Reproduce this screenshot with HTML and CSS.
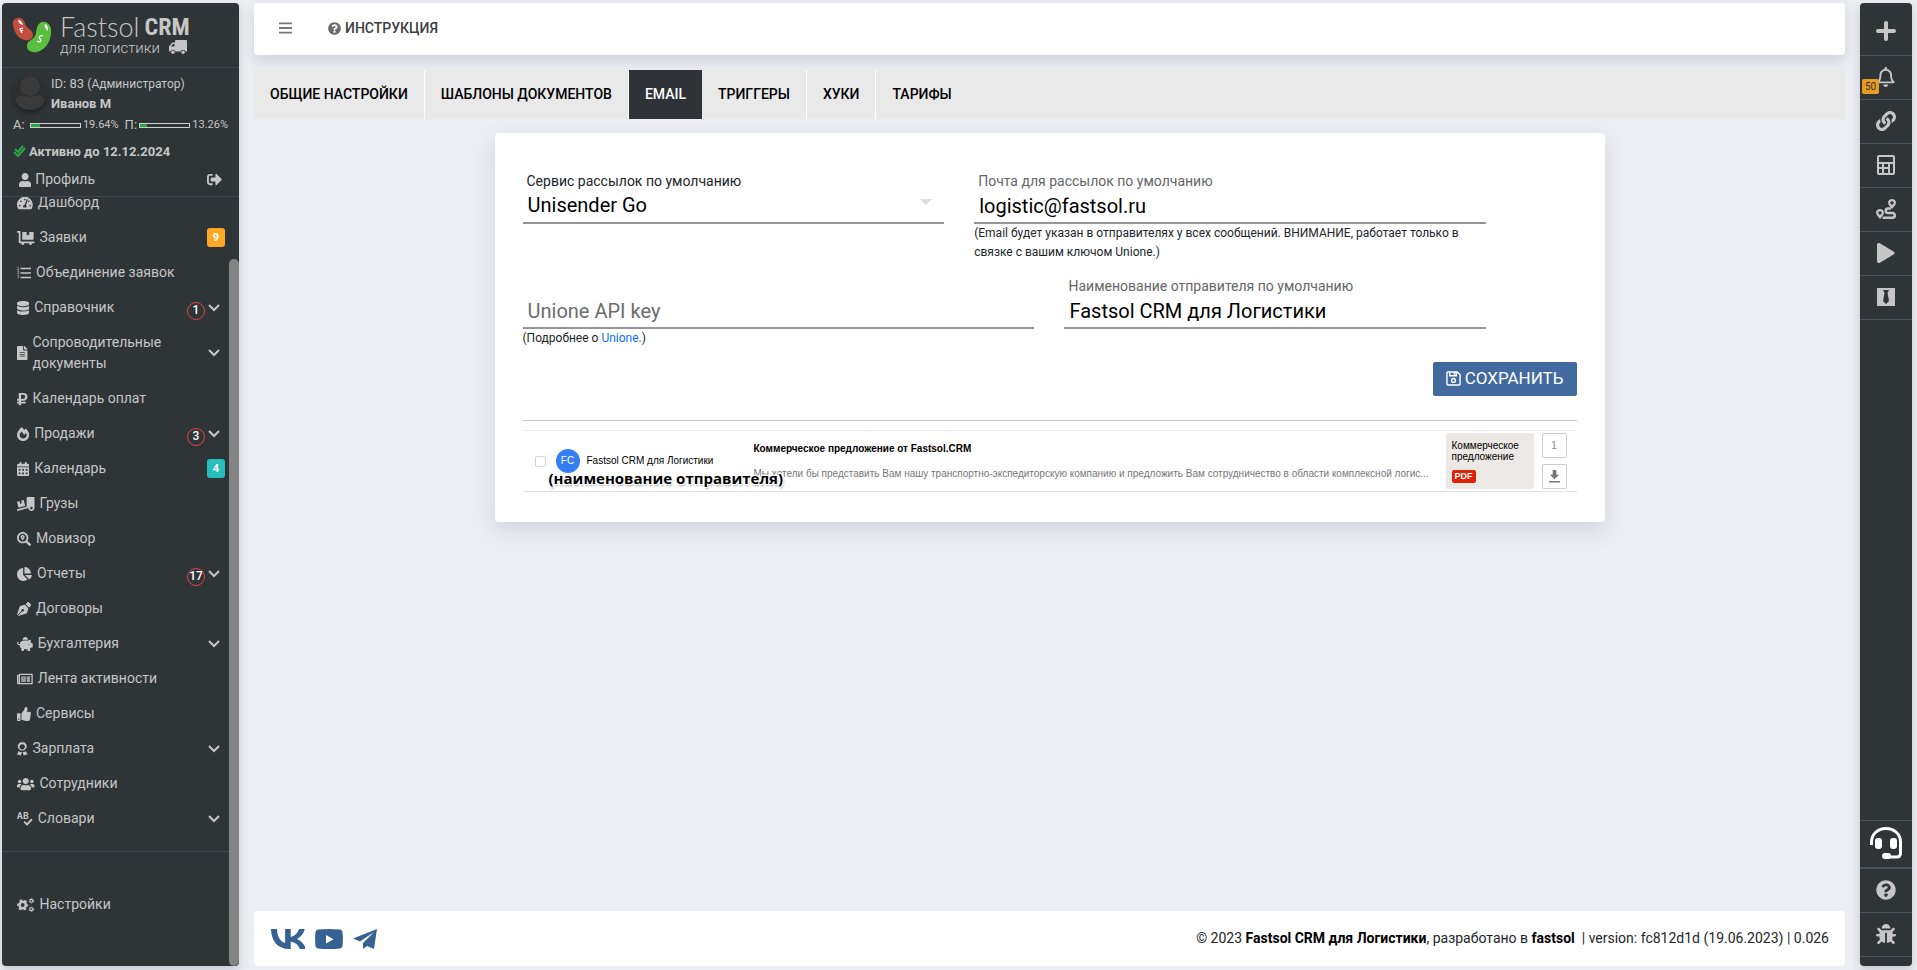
FILE: index.html
```html
<!DOCTYPE html>
<html lang="ru">
<head>
<meta charset="utf-8">
<meta name="viewport" content="width=device-width, initial-scale=1">
<title>Fastsol CRM для Логистики</title>
<link rel="stylesheet" href="styles.css">
</head>
<body>
<div class="app">

<aside class="sidebar">
  <a class="brand" href="#">
    <svg class="brand-mark" viewBox="0 0 40 36" aria-hidden="true">
      <path d="M1 8C0 3 4 0 8 1c5 1 4 6 7 9 3 3 6 4 6 8s-4 6-8 5C6 22 2 15 1 8z" fill="#c34c40"/>
      <path d="M28 6c4-3 10 0 11 6 1 9-4 21-14 23-6 1-11-2-10-7 1-5 6-5 8-9 2-5 1-10 5-13z" fill="#5abf3f"/>
      <path d="M6 3c3 0 4 2 5 5-3-1-5-2-5-5zM33 7c3 1 3 4 3 7-2-2-4-4-3-7z" fill="#fff"/>
      <path d="M10 16l-2-4 3-1M9 14l2-1M31 19c-3-1-5 1-3 3s0 4-3 2" fill="none" stroke="#fff" stroke-width="1.3"/>
    </svg>
    <span class="brand-text">
      <span class="brand-name"><span class="brand-thin">Fastsol</span><span class="brand-bold">CRM</span></span>
      <span class="brand-sub">для логистики
        <svg class="brand-truck" viewBox="0 0 18 14" aria-hidden="true"><path d="M7 0h10q1 0 1 1v10q0 .6-.6.600H16.600a2.600 2.600 0 0 0-5 0H6.400a2.600 2.600 0 0 0-5 0H.6Q0 11.600 0 11V6.500l3-3.700q.3-.3.800-.3H6V1q0-1 1-1zM4 4L2 6.500h3.500V4z" fill-rule="evenodd"/><circle cx="3.900" cy="12.200" r="1.700"/><circle cx="14.100" cy="12.200" r="1.700"/></svg>
      </span>
    </span>
  </a>

  <div class="user">
    <div class="user-head">
      <svg class="avatar" viewBox="0 0 34 34" aria-hidden="true"><circle cx="17" cy="17" r="17" fill="#2b2f32"/><circle cx="17" cy="10" r="10" fill="#3a3a3a"/><path d="M2 25c4-8 8-5 15-4 7-1 11-4 15 4a17 17 0 0 1-30 0z" fill="#3a3a3a"/></svg>
      <div>
        <div class="user-id">ID: 83 <small>(Администратор)</small></div>
        <div class="user-name">Иванов М</div>
      </div>
    </div>
    <div class="usage">
      <span class="usage-key">А:</span><span class="meter"><span class="meter-fill" style="width:19.64%"></span></span><span>19.64%</span>
      <span class="usage-key usage-next">П:</span><span class="meter"><span class="meter-fill" style="width:13.26%"></span></span><span>13.26%</span>
    </div>
    <div class="active-until">
      <svg class="check" viewBox="0 0 13 13" aria-hidden="true"><path d="M2 4l3 3 5-6M1 7l4 4 7-8" fill="none" stroke="#28a745" stroke-width="2"/></svg>
      Активно до 12.12.2024
    </div>
    <div class="profile">
      <a href="#"><svg class="icon" viewBox="0 0 448 512" aria-hidden="true"><path d="M224 256c70.7 0 128-57.3 128-128S294.700 0 224 0 96 57.300 96 128s57.300 128 128 128zm89.600 32h-16.700c-22.200 10.200-46.900 16-72.900 16s-50.600-5.800-72.900-16h-16.700C60.200 288 0 348.200 0 422.400V464c0 26.500 21.500 48 48 48h352c26.500 0 48-21.500 48-48v-41.600c0-74.200-60.200-134.400-134.400-134.400z"/></svg>Профиль</a>
      <a href="#" aria-label="Выход"><svg class="icon logout" viewBox="0 0 512 512" aria-hidden="true"><path d="M497 273L329 441c-15 15-41 4.500-41-17v-96H152c-13.300 0-24-10.700-24-24v-96c0-13.300 10.700-24 24-24h136V88c0-21.400 25.900-32 41-17l168 168c9.300 9.400 9.300 24.600 0 34zM192 436v-40c0-6.600-5.400-12-12-12H96c-17.700 0-32-14.300-32-32V160c0-17.700 14.300-32 32-32h84c6.600 0 12-5.400 12-12V76c0-6.600-5.400-12-12-12H96c-53 0-96 43-96 96v192c0 53 43 96 96 96h84c6.600 0 12-5.400 12-12z"/></svg></a>
    </div>
  </div>

  <div class="nav-scroll">
    <nav class="nav">
      <ul class="nav-list">
        <li><a href="#"><svg class="icon" viewBox="0 0 576 512"><path d="M288 32C128.940 32 0 160.940 0 320c0 52.800 14.250 102.260 39.060 144.800 5.610 9.620 16.300 15.200 27.440 15.200h443c11.140 0 21.830-5.580 27.440-15.200C561.750 422.260 576 372.800 576 320c0-159.060-128.940-288-288-288zm0 64c14.710 0 26.580 10.130 30.320 23.650-1.110 2.260-2.640 4.230-3.450 6.670l-9.220 27.670c-5.130 3.490-10.970 6.010-17.640 6.010-17.670 0-32-14.330-32-32S270.330 96 288 96zM96 384c-17.670 0-32-14.330-32-32s14.330-32 32-32 32 14.330 32 32-14.330 32-32 32zm48-160c-17.670 0-32-14.330-32-32s14.330-32 32-32 32 14.330 32 32-14.330 32-32 32zm246.770-72.410l-61.330 184C343.130 347.330 352 364.540 352 384c0 11.720-3.380 22.550-8.880 32H232.880c-5.500-9.450-8.880-20.280-8.880-32 0-33.940 26.500-61.430 59.900-63.590l61.340-184.010c4.170-12.560 17.730-19.450 30.360-15.170 12.570 4.190 19.350 17.790 15.170 30.360zm14.660 57.200l15.520-46.550c3.470-1.290 7.130-2.230 11.050-2.230 17.670 0 32 14.330 32 32s-14.330 32-32 32c-11.380-.01-20.890-6.280-26.570-15.220zM480 384c-17.670 0-32-14.330-32-32s14.330-32 32-32 32 14.330 32 32-14.330 32-32 32z"/></svg><span class="nav-label">Дашборд</span></a></li>
        <li><a href="#"><svg class="icon" viewBox="0 0 640 512"><path d="M208 320h384c8.800 0 16-7.200 16-16V48c0-8.800-7.200-16-16-16H448v128l-48-32-48 32V32H208c-8.800 0-16 7.200-16 16v256c0 8.800 7.200 16 16 16zm416 64H128V16c0-8.800-7.200-16-16-16H16C7.200 0 0 7.200 0 16v32c0 8.800 7.200 16 16 16h48v368c0 8.800 7.200 16 16 16h82.900c-1.800 5-2.900 10.400-2.900 16 0 26.500 21.500 48 48 48s48-21.500 48-48c0-5.600-1.200-11-2.900-16H451c-1.800 5-2.900 10.400-2.900 16 0 26.500 21.500 48 48 48s48-21.500 48-48c0-5.600-1.200-11-2.900-16H624c8.800 0 16-7.200 16-16v-32c0-8.800-7.200-16-16-16z"/></svg><span class="nav-label">Заявки</span><span class="tag tag-orange">9</span></a></li>
        <li><a href="#"><svg class="icon" viewBox="0 0 512 512"><path d="M128 64h384v56H128zM128 228h384v56H128zM128 392h384v56H128z"/><path d="M20 40h24v100M16 140h56M16 200h48v40l-46 40h54M16 344h50l-26 46c36 0 36 60-24 50" fill="none" stroke="currentColor" stroke-width="24"/></svg><span class="nav-label">Объединение заявок</span></a></li>
        <li><a href="#"><svg class="icon" viewBox="0 0 448 512"><path d="M448 73.143v45.714C448 159.143 347.667 192 224 192S0 159.143 0 118.857V73.143C0 32.857 100.333 0 224 0s224 32.857 224 73.143zM448 176v102.857C448 319.143 347.667 352 224 352S0 319.143 0 278.857V176c48.125 33.143 136.208 48.572 224 48.572S399.874 209.143 448 176zm0 160v102.857C448 479.143 347.667 512 224 512S0 479.143 0 438.857V336c48.125 33.143 136.208 48.572 224 48.572S399.874 369.143 448 336z"/></svg><span class="nav-label">Справочник</span><span class="ring">1</span><svg class="chev" viewBox="0 0 12 8"><path d="M1 1l5 5 5-5"/></svg></a></li>
        <li><a href="#"><svg class="icon" viewBox="0 0 384 512"><path d="M224 136V0H24C10.700 0 0 10.700 0 24v464c0 13.300 10.700 24 24 24h336c13.300 0 24-10.700 24-24V160H248c-13.200 0-24-10.800-24-24zm64 236c0 6.600-5.400 12-12 12H108c-6.600 0-12-5.400-12-12v-8c0-6.600 5.400-12 12-12h168c6.600 0 12 5.400 12 12v8zm0-64c0 6.600-5.400 12-12 12H108c-6.600 0-12-5.400-12-12v-8c0-6.600 5.400-12 12-12h168c6.600 0 12 5.400 12 12v8zm0-72v8c0 6.600-5.400 12-12 12H108c-6.600 0-12-5.400-12-12v-8c0-6.600 5.400-12 12-12h168c6.600 0 12 5.400 12 12zm96-114.100v6.100H256V0h6.100c6.400 0 12.500 2.500 17 7l97.900 98c4.500 4.500 7 10.600 7 16.900z"/></svg><span class="nav-label">Сопроводительные документы</span><svg class="chev" viewBox="0 0 12 8"><path d="M1 1l5 5 5-5"/></svg></a></li>
        <li><a href="#"><svg class="icon" viewBox="0 0 384 512"><path d="M239.360 320C324.480 320 384 260.542 384 175.071S324.480 32 239.360 32H76c-6.627 0-12 5.373-12 12v206.632H12c-6.627 0-12 5.373-12 12V308c0 6.627 5.373 12 12 12h52v32H12c-6.627 0-12 5.373-12 12v40c0 6.627 5.373 12 12 12h52v52c0 6.627 5.373 12 12 12h58.560c6.627 0 12-5.373 12-12v-52H308c6.627 0 12-5.373 12-12v-40c0-6.627-5.373-12-12-12H146.560v-32h92.800zm-92.800-219.252h78.720c46.720 0 74.880 29.110 74.880 74.323 0 45.832-28.160 75.561-76.160 75.561h-77.440V100.748z"/></svg><span class="nav-label">Календарь оплат</span></a></li>
        <li><a href="#"><svg class="icon" viewBox="0 0 448 512"><path d="M323.560 51.200c-20.800 19.300-39.580 39.590-56.220 59.970C240.080 73.620 206.280 35.530 168 0 69.740 91.170 0 209.960 0 281.600 0 408.850 100.290 512 224 512s224-103.150 224-230.400c0-53.270-51.980-163.140-124.440-230.400zm-19.470 340.650C282.430 407.010 255.720 416 226.860 416 154.710 416 96 368.260 96 290.750c0-38.610 24.310-72.630 72.790-130.750 6.930 7.980 98.830 125.340 98.830 125.340l58.630-66.880c4.140 6.850 7.910 13.550 11.270 19.970 27.350 52.190 15.810 118.970-33.430 153.420z"/></svg><span class="nav-label">Продажи</span><span class="ring">3</span><svg class="chev" viewBox="0 0 12 8"><path d="M1 1l5 5 5-5"/></svg></a></li>
        <li><a href="#"><svg class="icon" viewBox="0 0 448 512"><path fill-rule="evenodd" d="M96 0h64v64h128V0h64v64h48c26 0 48 22 48 48v48H0v-48c0-26 22-48 48-48h48zM0 192h448v272c0 26-22 48-48 48H48c-26 0-48-22-48-48zM64 256v64h64v-64zM192 256v64h64v-64zM320 256v64h64v-64zM64 384v64h64v-64zM192 384v64h64v-64zM320 384v64h64v-64z"/></svg><span class="nav-label">Календарь</span><span class="tag tag-teal">4</span></a></li>
        <li><a href="#"><svg class="icon" viewBox="0 0 640 512"><path d="M50.200 375.600c2.300 8.500 11.100 13.600 19.600 11.300l216.400-58c8.500-2.300 13.600-11.100 11.300-19.600l-49.700-185.500c-2.300-8.500-11.100-13.600-19.600-11.300L151 133.300l24.800 92.700-61.800 16.500-24.800-92.700-77.300 20.700C3.400 172.800-1.700 181.600.6 190.100l49.600 185.500zM384 0c-17.700 0-32 14.300-32 32v323.600L5.900 450c-4.300 1.200-6.800 5.600-5.600 9.800l12.600 46.300c1.200 4.300 5.600 6.800 9.800 5.600l393.700-107.400C418.800 464.100 467.600 512 528 512c61.900 0 112-50.100 112-112V0H384zm144 448c-26.500 0-48-21.500-48-48s21.500-48 48-48 48 21.500 48 48-21.500 48-48 48z"/></svg><span class="nav-label">Грузы</span></a></li>
        <li><a href="#"><svg class="icon" viewBox="0 0 512 512"><path d="M505.040 442.660l-99.710-99.690c-4.500-4.500-10.600-7-17-7h-16.300c27.600-35.300 44-79.690 44-127.990C416.030 93.090 322.920 0 208.020 0S0 93.090 0 207.980s93.110 207.980 208.020 207.980c48.300 0 92.710-16.400 128.010-44v16.300c0 6.400 2.500 12.500 7 17l99.710 99.690c9.400 9.400 24.600 9.400 33.900 0l28.300-28.300c9.400-9.400 9.400-24.590.1-33.990zm-297.020-90.700c-79.540 0-144-64.340-144-143.980 0-79.530 64.350-143.980 144-143.980 79.540 0 144 64.340 144 143.980 0 79.530-64.350 143.980-144 143.980zm.02-239.960c-40.780 0-73.840 33.050-73.840 73.830 0 32.960 48.260 93.050 66.750 114.860a9.240 9.240 0 0 0 14.180 0c18.490-21.810 66.750-81.890 66.750-114.860 0-40.780-33.060-73.830-73.840-73.830zm0 96c-13.260 0-24-10.750-24-24 0-13.260 10.750-24 24-24s24 10.740 24 24c0 13.250-10.750 24-24 24z"/></svg><span class="nav-label">Мовизор</span></a></li>
        <li><a href="#"><svg class="icon" viewBox="0 0 544 512"><path d="M527.790 288H290.500l158.030 158.030c6.040 6.040 15.980 6.530 22.190.68 38.700-36.460 65.320-85.610 73.130-140.860 1.340-9.460-6.510-17.850-16.060-17.850zm-15.830-64.800C503.720 103.740 408.260 8.280 288.800.04 279.680-.59 272 7.100 272 16.240V240h223.770c9.140 0 16.820-7.680 16.190-16.800zM224 288V50.710c0-9.550-8.390-17.400-17.840-16.060C86.990 51.490-4.100 155.600.14 280.370 4.500 408.510 114.830 513.590 243.030 511.980c50.400-.63 96.970-16.870 135.260-44.030 7.900-5.600 8.420-17.230 1.570-24.080L224 288z"/></svg><span class="nav-label">Отчеты</span><span class="ring">17</span><svg class="chev" viewBox="0 0 12 8"><path d="M1 1l5 5 5-5"/></svg></a></li>
        <li><a href="#"><svg class="icon" viewBox="0 0 512 512"><path d="M136.600 138.790a64.003 64.003 0 0 0-43.310 41.350L0 460l14.690 14.690L164.800 324.580c-2.990-6.260-4.800-13.180-4.800-20.580 0-26.510 21.490-48 48-48s48 21.490 48 48-21.490 48-48 48c-7.400 0-14.320-1.810-20.580-4.800L37.310 497.310 52 512l279.860-93.290a64.003 64.003 0 0 0 41.350-43.310L416 224 288 96l-151.400 42.790zm361.340-64.620l-60.110-60.110c-18.750-18.750-49.160-18.750-67.910 0l-56.550 56.550 128.020 128.020 56.550-56.550c18.750-18.750 18.750-49.150 0-67.910z"/></svg><span class="nav-label">Договоры</span></a></li>
        <li><a href="#"><svg class="icon" viewBox="0 0 576 512"><path d="M560 224h-29.500c-8.800-20-21.600-37.700-37.400-52.500L512 96h-32c-29.400 0-55.400 13.500-73 34.300-7.600-1.100-15.100-2.300-23-2.300H256c-77.400 0-141.900 55-156.800 128H56c-14.800 0-26.500-13.500-23.500-28.800C34.700 215.800 45.400 208 57 208h1c3.300 0 6-2.700 6-6v-20c0-3.300-2.700-6-6-6-28.500 0-53.900 20.400-57.500 48.600C-3.900 258.800 22.700 288 56 288h40c0 52.200 25.400 98.100 64 127.300V496c0 8.800 7.200 16 16 16h64c8.800 0 16-7.200 16-16v-48h128v48c0 8.800 7.200 16 16 16h64c8.800 0 16-7.200 16-16v-80.700c11.800-8.900 22.300-19.400 31.300-31.300H560c8.800 0 16-7.200 16-16V240c0-8.800-7.200-16-16-16zm-128 64c-8.800 0-16-7.200-16-16s7.200-16 16-16 16 7.200 16 16-7.200 16-16 16zM256 96h128c5.400 0 10.700.4 15.900.8 0-.3.1-.5.1-.8 0-53-43-96-96-96s-96 43-96 96c0 2.100.5 4.100.6 6.200 15.200-3.900 31-6.200 47.400-6.200z"/></svg><span class="nav-label">Бухгалтерия</span><svg class="chev" viewBox="0 0 12 8"><path d="M1 1l5 5 5-5"/></svg></a></li>
        <li><a href="#"><svg class="icon" viewBox="0 0 576 512"><path d="M552 64H112c-20.858 0-38.643 13.377-45.248 32H24c-13.255 0-24 10.745-24 24v272c0 30.928 25.072 56 56 56h496c13.255 0 24-10.745 24-24V88c0-13.255-10.745-24-24-24zM48 392V144h16v248c0 4.411-3.589 8-8 8s-8-3.589-8-8zm480 8H111.422c.374-2.614.578-5.283.578-8V112h416v288zM172 280h136c6.627 0 12-5.373 12-12v-96c0-6.627-5.373-12-12-12H172c-6.627 0-12 5.373-12 12v96c0 6.627 5.373 12 12 12zm28-80h80v40h-80v-40zm-40 140v-24c0-6.627 5.373-12 12-12h136c6.627 0 12 5.373 12 12v24c0 6.627-5.373 12-12 12H172c-6.627 0-12-5.373-12-12zm192 0v-24c0-6.627 5.373-12 12-12h104c6.627 0 12 5.373 12 12v24c0 6.627-5.373 12-12 12H364c-6.627 0-12-5.373-12-12zm0-144v-24c0-6.627 5.373-12 12-12h104c6.627 0 12 5.373 12 12v24c0 6.627-5.373 12-12 12H364c-6.627 0-12-5.373-12-12zm0 72v-24c0-6.627 5.373-12 12-12h104c6.627 0 12 5.373 12 12v24c0 6.627-5.373 12-12 12H364c-6.627 0-12-5.373-12-12z"/></svg><span class="nav-label">Лента активности</span></a></li>
        <li><a href="#"><svg class="icon" viewBox="0 0 512 512"><path d="M104 224H24c-13.255 0-24 10.745-24 24v240c0 13.255 10.745 24 24 24h80c13.255 0 24-10.745 24-24V248c0-13.255-10.745-24-24-24zM64 472c-13.255 0-24-10.745-24-24s10.745-24 24-24 24 10.745 24 24-10.745 24-24 24zM384 81.452c0 42.416-25.970 66.208-33.277 94.548h101.723c33.397 0 59.397 27.746 59.553 58.098.084 17.938-7.546 37.249-19.439 49.197l-.11.11c9.836 23.337 8.237 56.037-9.308 79.469 8.681 25.895-.069 57.704-16.382 74.757 4.298 17.598 2.244 32.575-6.148 44.632C440.202 511.587 389.616 512 346.839 512l-2.845-.001c-48.287-.017-87.806-17.598-119.560-31.725-15.957-7.099-36.821-15.887-52.651-16.178-6.540-.12-11.783-5.457-11.783-11.998v-213.770c0-3.200 1.282-6.271 3.558-8.521 39.614-39.144 56.648-80.587 89.117-113.111 14.804-14.832 20.188-37.236 25.393-58.902C282.515 39.293 291.817 0 312 0c24 0 72 8 72 81.452z"/></svg><span class="nav-label">Сервисы</span></a></li>
        <li><a href="#"><svg class="icon" viewBox="0 0 384 512"><path fill-rule="evenodd" d="M192 0l48 16 50 4 26 44 38 32-6 50 12 42-34 40-16 50-48 10-36 34-34-16-34 16-36-34-48-10-16-50-34-40 12-42-6-50 38-32 26-44 50-4zM192 80a96 96 0 1 0 .1 0zM52 338l76 24 56 14-56 136-38-42-86-4zM332 338l-76 24-56 14 56 136 38-42 86-4z"/></svg><span class="nav-label">Зарплата</span><svg class="chev" viewBox="0 0 12 8"><path d="M1 1l5 5 5-5"/></svg></a></li>
        <li><a href="#"><svg class="icon" viewBox="0 0 640 512"><path d="M96 224c35.300 0 64-28.700 64-64s-28.700-64-64-64-64 28.700-64 64 28.700 64 64 64zm448 0c35.300 0 64-28.700 64-64s-28.700-64-64-64-64 28.700-64 64 28.700 64 64 64zm32 32h-64c-17.600 0-33.500 7.100-45.100 18.600 40.300 22.100 68.900 62 75.100 109.400h66c17.700 0 32-14.300 32-32v-32c0-35.300-28.700-64-64-64zm-256 0c61.900 0 112-50.100 112-112S381.900 32 320 32 208 82.100 208 144s50.100 112 112 112zm76.800 32h-8.300c-20.800 10-43.900 16-68.500 16s-47.600-6-68.500-16h-8.300C179.600 288 128 339.600 128 403.200V432c0 26.500 21.500 48 48 48h288c26.500 0 48-21.500 48-48v-28.800c0-63.600-51.600-115.200-115.200-115.200zm-223.700-13.400C161.500 263.100 145.600 256 128 256H64c-35.300 0-64 28.700-64 64v32c0 17.700 14.300 32 32 32h65.900c6.300-47.400 34.900-87.300 75.200-109.400z"/></svg><span class="nav-label">Сотрудники</span></a></li>
        <li><a href="#"><svg class="icon" viewBox="0 0 576 512"><text x="-6" y="254" font-family="Roboto, sans-serif" font-size="330" font-weight="700">AB</text><path d="M262 350l104 104 182-188" fill="none" stroke="currentColor" stroke-width="70"/></svg><span class="nav-label">Словари</span><svg class="chev" viewBox="0 0 12 8"><path d="M1 1l5 5 5-5"/></svg></a></li>
      </ul>
      <div class="nav-foot">
        <a href="#"><svg class="icon" viewBox="0 0 640 512"><g fill="none" stroke="currentColor"><circle cx="208" cy="256" r="116" stroke-width="92"/><circle cx="208" cy="256" r="180" stroke-width="56" stroke-dasharray="94.200 94.300" stroke-dashoffset="47"/><circle cx="528" cy="102" r="54" stroke-width="42"/><circle cx="528" cy="102" r="84" stroke-width="34" stroke-dasharray="44 44"/><circle cx="528" cy="410" r="54" stroke-width="42"/><circle cx="528" cy="410" r="84" stroke-width="34" stroke-dasharray="44 44"/></g></svg><span class="nav-label">Настройки</span></a>
      </div>
    </nav>
    <div class="track"><div class="thumb"></div></div>
  </div>
</aside>

<div class="main">
  <header class="topbar">
    <button class="burger" type="button" aria-label="Меню"><svg viewBox="0 0 14 12" aria-hidden="true"><path d="M0 1h14M0 6h14M0 11h14" stroke="currentColor" stroke-width="2"/></svg></button>
    <a class="help" href="#"><svg class="icon" viewBox="0 0 512 512" aria-hidden="true"><path d="M504 256c0 136.997-111.043 248-248 248S8 392.997 8 256C8 119.083 119.043 8 256 8s248 111.083 248 248zM262.655 90c-54.497 0-89.255 22.957-116.549 63.758-3.536 5.286-2.353 12.415 2.715 16.258l34.699 26.310c5.205 3.947 12.621 3.008 16.665-2.122 17.864-22.658 30.113-35.797 57.303-35.797 20.429 0 45.698 13.148 45.698 32.958 0 14.976-12.363 22.667-32.534 33.976C247.128 238.528 216 254.941 216 296v4c0 6.627 5.373 12 12 12h56c6.627 0 12-5.373 12-12v-1.333c0-28.462 83.186-29.647 83.186-106.667 0-58.002-60.165-102-116.531-102zM256 338c-25.365 0-46 20.635-46 46 0 25.364 20.635 46 46 46s46-20.636 46-46c0-25.365-20.635-46-46-46z"/></svg>ИНСТРУКЦИЯ</a>
  </header>

  <nav class="tabs">
    <a href="#">ОБЩИЕ НАСТРОЙКИ</a>
    <a href="#">ШАБЛОНЫ ДОКУМЕНТОВ</a>
    <a class="is-active" href="#" aria-current="page">EMAIL</a>
    <a href="#">ТРИГГЕРЫ</a>
    <a href="#">ХУКИ</a>
    <a href="#">ТАРИФЫ</a>
  </nav>

  <main class="card">
    <form class="form">
      <div class="field span-5">
        <label class="label-dark" for="service">Сервис рассылок по умолчанию</label>
        <div class="select-wrap">
          <select id="service"><option>Unisender Go</option></select>
        </div>
      </div>
      <div class="field span-6">
        <label for="mail">Почта для рассылок по умолчанию</label>
        <input id="mail" type="text" value="logistic@fastsol.ru">
        <p>(Email будет указан в отправителях у всех сообщений. ВНИМАНИЕ, работает только в связке с вашим ключом Unione.)</p>
      </div>
      <div class="field field-bare span-6 row-start">
        <input id="key" type="text" placeholder="Unione API key" aria-label="Unione API key">
        <p>(Подробнее о <a href="#">Unione.</a>)</p>
      </div>
      <div class="field span-5">
        <label for="sender">Наименование отправителя по умолчанию</label>
        <input id="sender" type="text" value="Fastsol CRM для Логистики">
      </div>
    </form>
    <div class="actions">
      <button class="save" type="button"><svg viewBox="0 0 16 16" aria-hidden="true"><path d="M2 1h10l3 3v10l-1 1H2l-1-1V2zM4 1v4h7V1M9 1v3" fill="none" stroke="currentColor" stroke-width="1.500"/><circle cx="8" cy="10" r="2" fill="none" stroke="currentColor" stroke-width="1.500"/></svg>СОХРАНИТЬ</button>
    </div>
    <hr class="rule">
    <section class="preview">
      <input class="pick" type="checkbox" aria-label="Выбрать письмо">
      <span class="initials">FC</span>
      <span class="from">Fastsol CRM для Логистики</span>
      <div class="message">
        <strong>Коммерческое предложение от Fastsol.CRM</strong>
        <span>Мы хотели бы представить Вам нашу транспортно-экспедиторскую компанию и предложить Вам сотрудничество в области комплексной логис...</span>
      </div>
      <div class="attachment"><span>Коммерческое предложение</span><b>PDF</b></div>
      <div class="tools">
        <span class="tool">1</span>
        <button class="tool" type="button" aria-label="Скачать"><svg viewBox="0 0 12 14" aria-hidden="true"><path d="M4 0h4v5h3L6 10 1 5h3zM0 12h12v1.500H0z" fill="#777"/></svg></button>
      </div>
      <span class="note">(наименование отправителя)</span>
    </section>
  </main>

  <footer class="footer">
    <div class="social">
      <a href="#" aria-label="VK"><svg width="34" height="20" viewBox="3.450 7.890 17.300 11.100" preserveAspectRatio="none"><path d="M13.162 18.994c-6.098 0-9.570-4.172-9.714-11.104h3.047c.1 5.085 2.346 7.239 4.126 7.684V7.890h2.868v4.385c1.757-.189 3.603-2.187 4.225-4.385h2.870c-.479 2.715-2.484 4.713-3.910 5.537 1.426.667 3.710 2.412 4.578 5.567h-3.158c-.678-2.113-2.368-3.746-4.605-3.969v3.969h-.327z"/></svg></a>
      <a href="#" aria-label="YouTube"><svg width="28" height="20" viewBox="0 0 28 20"><path fill-rule="evenodd" d="M3 .5Q14-.5 25 .5q2 .3 2.500 2.500.8 7 0 14-.5 2.200-2.500 2.500-11 1-22 0-2-.3-2.500-2.500-.8-7 0-14Q1 .8 3 .5zM11 6v8.500l7.500-4.250z"/></svg></a>
      <a href="#" aria-label="Telegram"><svg width="24" height="20" viewBox="0 0 24 20"><path d="M24 0l-3 20-7-3-4 3v-6L21 3 7 12.500 0 9.500z"/></svg></a>
    </div>
    <p>© 2023 <b>Fastsol CRM для Логистики</b>, разработано в <b>fastsol</b>&nbsp; | version: fc812d1d (19.06.2023) | 0.026</p>
  </footer>
</div>

<aside class="rail">
  <button type="button" class="first" aria-label="Добавить"><svg viewBox="0 0 20 20"><path d="M10 2v16M2 10h16" fill="none" stroke="currentColor" stroke-width="4" stroke-linecap="round"/></svg></button>
  <button type="button" aria-label="Уведомления"><svg viewBox="0 0 448 512"><path d="M439.390 362.290c-19.320-20.760-55.470-51.990-55.470-154.290 0-77.700-54.480-139.900-127.940-155.160V32c0-17.670-14.320-32-31.980-32s-31.980 14.330-31.980 32v20.840C118.560 68.100 64.080 130.300 64.080 208c0 102.300-36.150 133.530-55.470 154.290-6 6.450-8.660 14.160-8.610 21.710.11 16.400 12.980 32 32.100 32h383.800c19.120 0 32-15.600 32.100-32 .05-7.550-2.610-15.270-8.610-21.710zM67.530 368c21.220-27.970 44.420-74.330 44.530-159.420 0-.2-.06-.38-.06-.58 0-61.860 50.140-112 112-112s112 50.140 112 112c0 .2-.06.38-.06.58.11 85.100 23.310 131.460 44.530 159.420H67.530zM224 512c35.320 0 63.970-28.650 63.970-64H160.030c0 35.350 28.650 64 63.970 64z"/></svg><span class="count">50</span></button>
  <button type="button" aria-label="Ссылка"><svg viewBox="0 0 512 512"><path d="M326.612 185.391c59.747 59.809 58.927 155.698.36 214.590-.11.12-.24.25-.36.37l-67.200 67.200c-59.270 59.270-155.699 59.262-214.960 0-59.270-59.260-59.270-155.700 0-214.960l37.106-37.106c9.840-9.840 26.786-3.300 27.294 10.606.648 17.722 3.826 35.527 9.690 52.721 1.986 5.822.567 12.262-3.783 16.612l-13.087 13.087c-28.026 28.026-28.905 73.660-1.155 101.960 28.024 28.579 74.086 28.749 102.325.51l67.200-67.190c28.191-28.191 28.073-73.757 0-101.830-3.701-3.694-7.429-6.564-10.341-8.569a16.037 16.037 0 0 1-6.947-12.606c-.396-10.567 3.348-21.456 11.698-29.806l21.054-21.055c5.521-5.521 14.182-6.199 20.584-1.731a152.482 152.482 0 0 1 20.522 17.197zM467.547 44.449c-59.261-59.262-155.690-59.270-214.960 0l-67.200 67.200c-.12.12-.25.25-.36.37-58.566 58.892-59.387 154.781.36 214.590a152.454 152.454 0 0 0 20.521 17.196c6.402 4.468 15.064 3.789 20.584-1.731l21.054-21.055c8.350-8.350 12.094-19.239 11.698-29.806a16.037 16.037 0 0 0-6.947-12.606c-2.912-2.005-6.640-4.875-10.341-8.569-28.073-28.073-28.191-73.639 0-101.830l67.200-67.190c28.239-28.239 74.300-28.069 102.325.51 27.750 28.300 26.872 73.934-1.155 101.960l-13.087 13.087c-4.350 4.350-5.769 10.790-3.783 16.612 5.864 17.194 9.042 34.999 9.690 52.721.509 13.906 17.454 20.446 27.294 10.606l37.106-37.106c59.271-59.259 59.271-155.699.001-214.959z"/></svg></button>
  <button type="button" aria-label="Калькулятор"><svg viewBox="0 0 18 20"><path fill-rule="evenodd" d="M2 0h14q2 0 2 2v16q0 2-2 2H2q-2 0-2-2V2Q0 0 2 0zM2 2v5h14V2zM2 9v3h3V9zM7 9v3h4V9zM13 9v9h3V9zM2 14v4h3v-4zM7 14v4h4v-4z"/></svg></button>
  <button type="button" aria-label="Маршрут"><svg viewBox="0 0 20 20"><path fill-rule="evenodd" d="M16 0c2.200 0 4 1.700 4 3.800C20 6 17.500 8 16 10c-1.500-2-4-4-4-6.200C12 1.700 13.800 0 16 0zm0 2.200a1.700 1.700 0 1 0 .01 0zM4 10c2.200 0 4 1.700 4 3.800C8 16 5.500 18 4 20c-1.500-2-4-4-4-6.200C0 11.700 1.800 10 4 10zm0 2.200a1.700 1.700 0 1 0 .01 0z"/><path d="M15 9.500h-3a2.200 2.200 0 0 0 0 4.500h4.500a2.300 2.300 0 0 1 0 4.700H6.500" fill="none" stroke="currentColor" stroke-width="2.400"/></svg></button>
  <button type="button" aria-label="Запуск"><svg viewBox="0 0 448 512"><path d="M424.400 214.700L72.400 6.600C43.800-10.300 0 6.100 0 47.900V464c0 37.500 40.700 60.100 72.400 41.300l352-208c31.400-18.500 31.500-64.100 0-82.600z"/></svg></button>
  <button type="button" aria-label="Кабинет"><svg viewBox="0 0 18 20"><path fill-rule="evenodd" d="M0 1h18v18H0zM6 3l1.500 3L6 14l3 3 3-3-1.500-8L12 3z"/></svg></button>
  <div class="rail-gap"></div>
  <button type="button" class="support" aria-label="Поддержка"><svg viewBox="0 0 32 32"><path d="M1.500 18v-3C1.500 7 8 1.500 16 1.500S30.500 7 30.500 15v11q0 4-4 4H17" fill="none" stroke="currentColor" stroke-width="3"/><rect x="5" y="11" width="7" height="11" rx="3"/><rect x="20" y="11" width="7" height="11" rx="3"/><rect x="12" y="26" width="9" height="6" rx="3"/></svg></button>
  <button type="button" aria-label="Помощь"><svg viewBox="0 0 512 512"><path d="M504 256c0 136.997-111.043 248-248 248S8 392.997 8 256C8 119.083 119.043 8 256 8s248 111.083 248 248zM262.655 90c-54.497 0-89.255 22.957-116.549 63.758-3.536 5.286-2.353 12.415 2.715 16.258l34.699 26.310c5.205 3.947 12.621 3.008 16.665-2.122 17.864-22.658 30.113-35.797 57.303-35.797 20.429 0 45.698 13.148 45.698 32.958 0 14.976-12.363 22.667-32.534 33.976C247.128 238.528 216 254.941 216 296v4c0 6.627 5.373 12 12 12h56c6.627 0 12-5.373 12-12v-1.333c0-28.462 83.186-29.647 83.186-106.667 0-58.002-60.165-102-116.531-102zM256 338c-25.365 0-46 20.635-46 46 0 25.364 20.635 46 46 46s46-20.636 46-46c0-25.365-20.635-46-46-46z"/></svg></button>
  <button type="button" aria-label="Сообщить об ошибке"><svg viewBox="0 0 512 512"><path d="M511.988 288.900c-.478 17.430-15.217 31.100-32.653 31.100H424v16c0 21.864-4.882 42.584-13.600 61.145l60.228 60.228c12.496 12.497 12.496 32.758 0 45.255-12.498 12.497-32.759 12.496-45.256 0l-54.736-54.736C345.886 467.965 314.351 480 280 480V236c0-6.627-5.373-12-12-12h-24c-6.627 0-12 5.373-12 12v244c-34.351 0-65.886-12.035-90.636-32.108l-54.736 54.736c-12.498 12.497-32.759 12.496-45.256 0-12.496-12.497-12.496-32.758 0-45.255l60.228-60.228C92.882 378.584 88 357.864 88 336v-16H32.666C15.230 320 .491 306.330.013 288.900-.484 270.816 14.028 256 32 256h56v-58.745l-46.628-46.628c-12.496-12.497-12.496-32.758 0-45.255 12.498-12.497 32.758-12.497 45.256 0L141.255 160h229.489l54.627-54.627c12.498-12.497 32.758-12.497 45.256 0 12.496 12.497 12.496 32.758 0 45.255L424 197.255V256h56c17.972 0 32.484 14.816 31.988 32.900zM257 0c-61.856 0-112 50.144-112 112h224C369 50.144 318.856 0 257 0z"/></svg></button>
</aside>

</div>
</body>
</html>
```

FILE: styles.css
```css
* { box-sizing: border-box; }
body {
  margin: 0;
  background: #edeef3;
  color: #212529;
  font: 14px/21px Roboto, "Noto Sans", sans-serif;
}
a { color: inherit; text-decoration: none; }
p { margin: 0; }
svg { display: block; flex: none; fill: currentColor; }
button, input, select { font: inherit; color: inherit; }
button { border: 0; padding: 0; background: none; cursor: pointer; }

.app {
  display: flex;
  gap: 15px;
  height: 100vh;
  padding: 3px 5px 4px 2px;
}
.icon { height: 14px; width: auto; }

/* Left sidebar */
.sidebar {
  flex: none;
  display: flex;
  flex-direction: column;
  width: 237px;
  border-radius: 4px;
  overflow: hidden;
  background: #2f3437;
  color: #c6c6c6;
  box-shadow: 0 4px 10px rgba(40, 50, 80, .2);
}
.brand {
  display: flex;
  gap: 8px;
  height: 65px;
  padding: 11px 10px 0;
  border-bottom: 1px solid #414b54;
}
.brand-mark { width: 40px; height: 36px; margin-top: 3px; }
.brand-name { display: flex; gap: 5px; line-height: 26px; white-space: nowrap; }
.brand-thin { font-family: Lato, sans-serif; font-weight: 300; font-size: 27px; }
.brand-bold { font-family: "Roboto Condensed", "Liberation Sans Narrow", Roboto, sans-serif; font-weight: 700; font-size: 24px; }
.brand-sub { display: flex; gap: 9px; font-weight: 300; font-size: 15px; line-height: 16px; white-space: nowrap; }
.brand-truck { width: 18px; height: 14px; }

.user { padding: 6px 11px 0; height: 129px; border-bottom: 1px solid #414b54; }
.user-head { display: flex; gap: 4px; }
.avatar { width: 34px; height: 34px; margin-top: 2px; border-radius: 50%; box-shadow: 0 3px 5px rgba(0, 0, 0, .35); }
.user-id { font-size: 13px; line-height: 20px; white-space: nowrap; }
.user-id small { font-size: 12px; }
.user-name { font-weight: 700; font-size: 13px; line-height: 20px; }
.usage { display: flex; align-items: center; gap: 2px; margin-top: 1px; font-size: 11px; line-height: 20px; }
.usage-key { font-size: 13px; margin-right: 3px; }
.usage-next { margin-left: 4px; margin-right: 0; }
.meter { flex: 1; height: 5px; border: 1px solid #d0d0d0; }
.meter-fill { display: block; height: 100%; background: #28a745; }
.active-until { display: flex; align-items: center; gap: 3px; margin-top: 6px; font-weight: 700; font-size: 13px; }
.check { width: 13px; height: 13px; }
.profile { display: flex; justify-content: space-between; align-items: center; margin-top: 7px; padding: 0 6px; }
.profile a { display: flex; align-items: center; gap: 4px; }
.logout { height: 15px; }

.nav-scroll { flex: 1; display: flex; min-height: 0; overflow: hidden; }
.nav { flex: 1; min-width: 0; }
.nav-list { list-style: none; margin: -12px 0 0; padding: 0 0 15px; border-bottom: 1px solid #414b54; }
.nav a { display: flex; align-items: center; gap: 5px; padding: 7px 4px 7px 15px; }
.nav-label { flex: 1; }
.chev { width: 12px; height: 8px; margin-right: 5px; }
.chev path { fill: none; stroke: currentColor; stroke-width: 2; }
.ring {
  width: 18px; height: 18px; margin: 4px -2px -2px 0;
  border: 1px solid #e5424a; border-radius: 50%;
  color: #fff; font-weight: 500; font-size: 12px; line-height: 15px; text-align: center;
}
.tag { width: 18px; height: 19px; border-radius: 3px; color: #fff; font-weight: 700; font-size: 11px; line-height: 19px; text-align: center; }
.tag-orange { background: #ffa726; }
.tag-teal { background: #26bfb9; }
.nav-foot { padding-top: 35px; }
.track { display: flex; width: 10px; padding-top: 62px; }
.thumb { flex: 1; border-radius: 5px; background: #848484; }

/* Centre column */
.main { flex: 1; min-width: 0; display: flex; flex-direction: column; }
.topbar {
  display: flex;
  align-items: center;
  gap: 36px;
  height: 52px;
  padding: 0 25px 2px;
  border-radius: 4px;
  background: #fff;
  box-shadow: 0 6px 14px rgba(60, 70, 100, .16);
}
.burger { color: #777; }
.burger svg { width: 13px; height: 12px; }
.help { display: flex; align-items: center; gap: 4px; color: #3c4043; font-weight: 500; }
.help .icon { height: 13px; color: #6b6b6b; }
.tabs { display: flex; margin-top: 15px; background: #e9e9e9; color: #000; font-weight: 500; }
.tabs a { padding: 14px 16px; border-right: 1px solid #fff; }
.tabs a:last-child { border-right: 0; }
.tabs .is-active { border-right: 0; background: #2f3237; color: #fff; }

.card {
  width: 100%;
  max-width: 1110px;
  margin: 14px auto 0;
  padding: 38px 28px 30px;
  border-radius: 4px;
  background: #fff;
  box-shadow: 0 8px 20px rgba(60, 70, 100, .15);
}
.form { display: grid; grid-template-columns: repeat(12, minmax(0, 1fr)); gap: 14px 30px; }
.span-5 { grid-column: span 5; }
.span-6 { grid-column: span 6; }
.row-start { grid-column: 1 / span 6; }
.field label { display: block; padding-left: 4px; line-height: 20px; color: #666; }
.field .label-dark { color: #212529; }
.field-bare { padding-top: 20px; }
.field input, .field select {
  display: block;
  width: 100%;
  height: 33px;
  padding: 0 5px 2px;
  border: 0;
  border-bottom: 2px solid #959595;
  border-radius: 0;
  background: none;
  color: #000;
  font-size: 20px;
  appearance: none;
  outline: 0;
}
.field input::placeholder { color: #6c6c6c; opacity: 1; }
.field p { font-size: 12px; line-height: 19px; }
.field p a { color: #0d6efd; }
.select-wrap { position: relative; }
.select-wrap::after {
  content: "";
  position: absolute;
  right: 12px;
  top: 8px;
  border: 6px solid transparent;
  border-top-color: #ddd;
  border-bottom: 0;
  pointer-events: none;
}
.actions { display: flex; justify-content: flex-end; margin-top: 14px; }
.save {
  display: flex;
  align-items: center;
  gap: 4px;
  height: 34px;
  padding: 0 13px 2px;
  border-radius: 2px;
  background: #426a9e;
  color: #fff;
  font-weight: 400;
  font-size: 17px;
}
.save svg { width: 15px; height: 15px; }
.rule { margin: 24px 0 9px; border: 0; border-top: 1px solid #c4c4c4; }

.preview {
  position: relative;
  display: flex;
  align-items: center;
  height: 62px;
  padding: 0 10px 0 12px;
  border-top: 1px solid #ececec;
  border-bottom: 1px solid #e2e2e2;
  color: #000;
  font: 10px/12px "Liberation Sans", Arial, sans-serif;
}
.pick { appearance: none; width: 11px; height: 11px; margin: 0 10px 0 0; border: 1px solid #d5d5d5; border-radius: 2px; }
.initials {
  width: 24px; height: 24px; margin-right: 7px;
  border-radius: 50%; background: #357df0; color: #fff;
  line-height: 24px; text-align: center;
}
.from { width: 167px; }
.message { flex: 1; min-width: 0; display: flex; flex-direction: column; gap: 13px; white-space: nowrap; }
.message span { color: #777; overflow: hidden; }
.attachment {
  display: flex; flex-direction: column; align-items: flex-start; justify-content: space-between;
  width: 88px; height: 56px; margin-left: 11px; padding: 7px 6px 6px;
  border-radius: 2px; background: #ece8e5; line-height: 11px;
}
.attachment b { padding: 0 3px; border-radius: 2px; background: #dd2208; color: #fff; font-size: 9px; line-height: 13px; }
.tools { display: flex; flex-direction: column; gap: 6px; margin-left: 8px; }
.tool {
  display: flex; align-items: center; justify-content: center;
  width: 25px; height: 25px; border: 1px solid #ccc; border-radius: 2px; color: #888;
}
.tool svg { width: 11px; height: 13px; }
.note {
  position: absolute;
  left: 26px;
  top: 37px;
  font: 700 15px/20px "Open Sans", "Noto Sans", sans-serif;
  white-space: nowrap;
  text-shadow: 0 0 2px #fff, 1px 1px 1px #fff, -1px -1px 1px #fff, 1px -1px 1px #fff, -1px 1px 1px #fff, 1px 2px 2px #999;
}

.footer {
  display: flex;
  align-items: center;
  justify-content: space-between;
  height: 55px;
  margin-top: auto;
  padding: 0 16px 0 17px;
  border-radius: 4px;
  background: #fff;
  color: #212529;
}
.footer b { color: #000; }
.social { display: flex; gap: 10px; color: #366293; }

/* Right tool rail */
.rail {
  flex: none;
  display: flex;
  flex-direction: column;
  width: 52px;
  padding-bottom: 9px;
  border-radius: 4px;
  background: #2f3437;
  color: #c6c6c6;
  box-shadow: 0 4px 10px rgba(40, 50, 80, .2);
}
.rail button {
  position: relative;
  display: flex;
  flex: none;
  align-items: center;
  justify-content: center;
  height: 44px;
  padding-bottom: 2px;
  border-bottom: 1px solid #46525c;
}
.rail .first { height: 53px; padding-top: 6px; }
.rail svg { height: 20px; }
.rail-gap { flex: 1; border-bottom: 1px solid #46525c; }
.rail .support { height: 48px; border-bottom-width: 2px; color: #fff; }
.rail .support svg { height: 32px; }
.count {
  position: absolute;
  left: 2px;
  top: 23px;
  padding: 0 3px;
  border-radius: 2px;
  background: #e89b20;
  color: #333;
  font-size: 10px;
  line-height: 15px;
}
```
